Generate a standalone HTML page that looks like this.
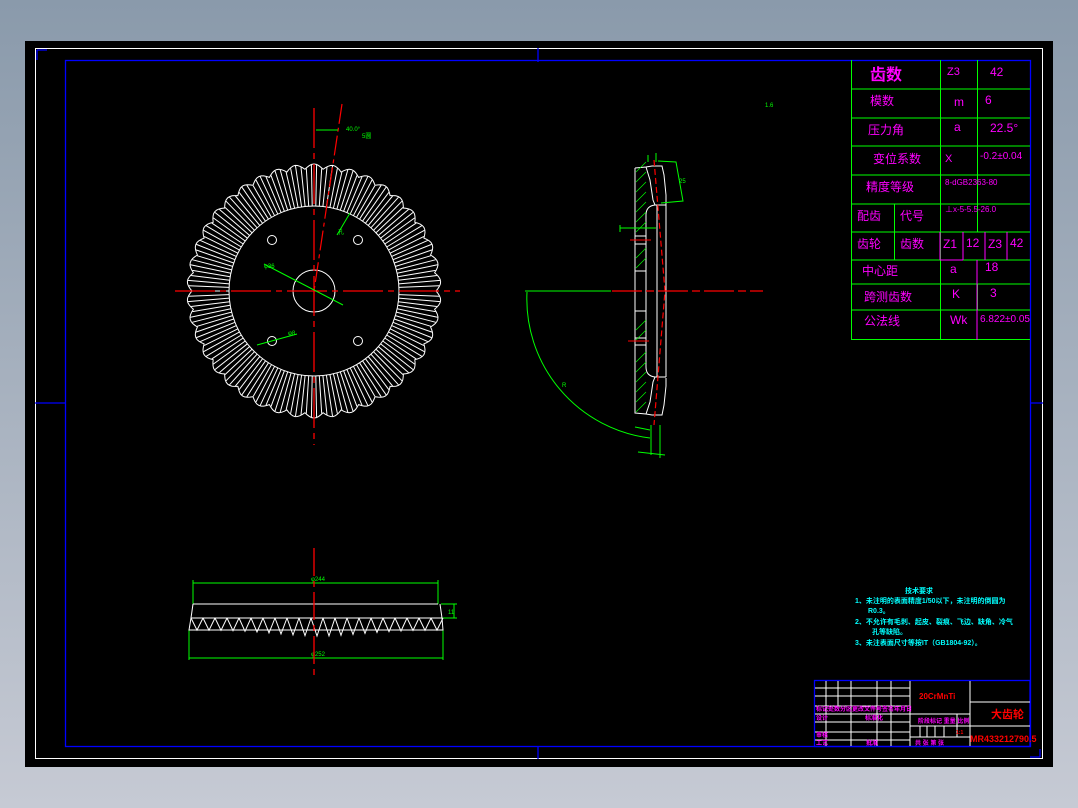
<!DOCTYPE html>
<html><head><meta charset="utf-8"><style>
html,body{margin:0;padding:0}
body{width:1078px;height:808px;overflow:hidden;background:linear-gradient(#8a9aab,#c6cad4);position:relative;font-family:"Liberation Sans","Noto Sans CJK SC",sans-serif}
svg{position:absolute;left:0;top:0}
text{font-family:"Liberation Sans","Noto Sans CJK SC",sans-serif}
</style></head><body>
<svg width="1078" height="808" viewBox="0 0 1078 808" xmlns="http://www.w3.org/2000/svg">
<rect x="25" y="41" width="1028" height="726" fill="#000"/>
<rect x="35.5" y="48.5" width="1007" height="710" fill="none" stroke="#fff" stroke-width="1"/>
<rect x="65.5" y="60.5" width="965" height="686" fill="none" stroke="#00f" stroke-width="1.3"/>
<path d="M37 50v10M37 50h10M538 48v14M538 746v13M35 403h30M1030 403h13M1040 757h-10M1040 757v-8" stroke="#00f" stroke-width="1.3"/>

<g id="gear" stroke="#fff" stroke-width="1" fill="none">
<circle cx="314" cy="291" r="85"/>
<circle cx="314" cy="291" r="21"/>
<circle cx="272" cy="240" r="4.5"/><circle cx="358" cy="240" r="4.5"/>
<circle cx="272" cy="341" r="4.5"/><circle cx="358" cy="341" r="4.5"/>
<path id="outer" d=""/>
<g id="rays"></g>
</g>
<path d="M314 108V445" stroke="#f00" stroke-width="1.3" stroke-dasharray="40,5,6,5"/>
<path d="M175 291H460" stroke="#f00" stroke-width="1.3" stroke-dasharray="40,5,6,5"/>
<path d="M342 104L314 291" stroke="#f00" stroke-width="1.2" stroke-dasharray="20,4,4,4"/>
<g stroke="#0f0" stroke-width="1" fill="none">
<path d="M316 130H338"/><path d="M264 264L343 305"/><path d="M257 345L297 334"/><path d="M337 235L350 213"/>
</g>
<g fill="#0f0" font-size="6"><text x="346" y="131">40.0°</text><text x="362" y="138">5圆</text><text x="264" y="268">φ36</text><text x="288" y="335">φ8</text><text x="338" y="234">孔</text></g>

<g stroke="#fff" stroke-width="1" fill="none">
<path d="M635 168L646 167L652 166L662 166L664 175L666 195L666 205M635 168V413L646 414L652 415L662 415L664 405L666 386L666 378"/>
<path d="M646 167L650 180L653 200L655 205H666M646 414L650 402L653 382L655 377H666"/>
<path d="M655 205Q646 206 646 215V367Q646 376 655 377"/>
<path d="M657 205V377M666 205V377"/>
<path d="M635 236H646M635 244H646M635 271H646M635 311H646M635 338H646M635 345H646"/>
</g>
<g stroke="#0f0" stroke-width="0.7">
<path d="M636 172L646 162M636 182L646 172M636 192L646 182M636 202L646 192M636 212L646 202M636 222L646 212M636 232L646 222M636 258L646 248M636 268L646 258M636 330L646 320M636 340L646 330M636 362L646 352M636 372L646 362M636 382L646 372M636 392L646 382M636 402L646 392M636 412L646 402"/>
</g>
<path d="M654 160L665 291L654 425" stroke="#f00" stroke-width="1.2" fill="none" stroke-dasharray="6,3"/>
<path d="M630 240H651M628 341H649" stroke="#f00" stroke-width="1"/>
<path d="M612 291H763" stroke="#f00" stroke-width="1.2" stroke-dasharray="30,4,8,4"/>
<g stroke="#0f0" stroke-width="1" fill="none">
<path d="M525 291H611"/>
<path d="M527 292A140 140 0 0 0 650 438"/>
<path d="M658 161L676 162L683 201L661 203M620 228H656M620 225V232"/>
<path d="M648 155V162M656 153V162M651 425V455M660 425V458M638 452L665 455M635 427L650 430"/>
</g>
<g fill="#0f0" font-size="6"><text x="679" y="183">25</text><text x="562" y="387">R</text><text x="765" y="107">1.6</text></g>

<g stroke="#0f0" stroke-width="1" fill="none">
<path d="M193 583H438M193 580V604M438 580V604M189 658H443M189 630V660M443 630V660M441 604H457M441 618H457M454 604V618"/>
</g>
<g fill="#0f0" font-size="6"><text x="311" y="581">φ244</text><text x="311" y="656">φ252</text><text x="448" y="614">11</text></g>
<g stroke="#fff" stroke-width="1" fill="none">
<path d="M193 604H438M193 604L191 618H442L440 604M191 618L189 630H443L442 618"/>
<path id="zig" d=""/>
</g>
<path d="M314 548V680" stroke="#f00" stroke-width="1.3" stroke-dasharray="28,5,6,5"/>

<g stroke="#0f0" stroke-width="1" fill="none">
<path d="M851.5 60V340M940.5 60V340M977.5 60V232M977.5 284V310"/>
<path d="M851 89H1030M851 118H1030M851 146H1030M851 175H1030M851 204H1030M851 232H1030M851 260H1030M851 284H1030M851 310H1030M851 339.5H1030M894.5 204V260"/>
</g>
<g stroke="#f0f" stroke-width="1"><path d="M940 232V260M963 232V260M985 232V260M1007 232V260M977 260V340M940 260H963"/></g>
<g fill="#f0f" font-size="12">
<text x="870" y="80" font-size="16" font-weight="bold">齿数</text>
<text x="947" y="75" font-size="11">Z3</text><text x="990" y="76">42</text>
<text x="870" y="105">模数</text><text x="954" y="106">m</text><text x="985" y="104">6</text>
<text x="868" y="134">压力角</text><text x="954" y="131">a</text><text x="990" y="132">22.5°</text>
<text x="873" y="163">变位系数</text><text x="945" y="162" font-size="11">X</text><text x="980" y="159" font-size="10">-0.2±0.04</text>
<text x="866" y="191">精度等级</text><text x="945" y="185" font-size="8">8-dGB2363-80</text>
<text x="857" y="220">配齿</text><text x="900" y="220">代号</text><text x="945" y="212" font-size="8">⊥x-5-5.5-26.0</text>
<text x="857" y="248">齿轮</text><text x="900" y="248">齿数</text><text x="943" y="248">Z1</text><text x="966" y="247">12</text><text x="988" y="248">Z3</text><text x="1010" y="247">42</text>
<text x="862" y="275">中心距</text><text x="950" y="273">a</text><text x="985" y="271">18</text>
<text x="864" y="301">跨测齿数</text><text x="952" y="298">K</text><text x="990" y="297">3</text>
<text x="864" y="325">公法线</text><text x="950" y="324">Wk</text><text x="980" y="322" font-size="10">6.822±0.05</text>
</g>

<g fill="#0ff" font-size="7" font-weight="bold">
<text x="905" y="593">技术要求</text>
<text x="855" y="603">1、未注明的表面精度1/50以下，未注明的倒圆为</text>
<text x="868" y="613">R0.3。</text>
<text x="855" y="624">2、不允许有毛刺、起皮、裂痕、飞边、缺角、冷气</text>
<text x="872" y="634">孔等缺陷。</text>
<text x="855" y="645">3、未注表面尺寸等按IT（GB1804-92）。</text>
</g>

<rect x="814.5" y="680.5" width="215.5" height="66" fill="none" stroke="#00f" stroke-width="1.3"/>
<g stroke="#fff" stroke-width="1" fill="none">
<path d="M826 681V746M838 681V706M851 681V746M877 681V746M891 681V746M910 681V746M970 681V746"/>
<path d="M815 688H910M815 696H910M815 706H910M815 714H910M815 722H910M815 732H910M815 740H910"/>
<path d="M970 702H1030M970 726H1030M910 714H970M910 726H970M910 737H970M920 726V737M927 726V737M935 726V737M944 726V737M957 714V737"/>
</g>
<g fill="#f0f" font-size="6" font-weight="bold">
<text x="816" y="711">标记处数分区更改文件号签名年月日</text>
<text x="816" y="720">设计</text><text x="865" y="720">标准化</text>
<text x="816" y="737">审核</text><text x="816" y="745">工艺</text><text x="866" y="745">批准</text>
<text x="918" y="723">阶段标记 重量 比例</text><text x="915" y="745">共 张 第 张</text>
</g>
<g fill="#f00" font-weight="bold">
<text x="919" y="699" font-size="8">20CrMnTi</text>
<text x="991" y="718" font-size="11">大齿轮</text>
<text x="970" y="742" font-size="9">MR433212790.5</text>
<text x="956" y="734" font-size="5">1:1</text>
</g>
</svg>
<script>
(function(){
var cx=314,cy=291,N=42,ro=127,ra=122;
var d='';
for(var i=0;i<=N*8;i++){var t=i/(N*8)*2*Math.PI;var f=(i%8)/8;var r=ra+(ro-ra)*Math.sin(Math.PI*f);
d+=(i?'L':'M')+(cx+r*Math.cos(t)).toFixed(1)+' '+(cy+r*Math.sin(t)).toFixed(1);}
document.getElementById('outer').setAttribute('d',d);
var g='';var M=150;
for(var j=0;j<M;j++){var t=j/M*2*Math.PI;var f=((t/(2*Math.PI)*N)%1);var r=ra+(ro-ra)*Math.sin(Math.PI*f)-0.5;
g+='M'+(cx+85*Math.cos(t)).toFixed(1)+' '+(cy+85*Math.sin(t)).toFixed(1)+'L'+(cx+r*Math.cos(t)).toFixed(1)+' '+(cy+r*Math.sin(t)).toFixed(1);}
document.getElementById('rays').innerHTML='<path d="'+g+'"/>';
var z='';for(var k=0;k<21;k++){var x0=191+k*12;var depth=630+6*Math.exp(-Math.pow((x0-314)/60,2));z+='M'+x0+' 618L'+(x0+6)+' '+depth.toFixed(1)+'L'+(x0+12)+' 618';}
document.getElementById('zig').setAttribute('d',z);
})();
</script>
</body></html>
